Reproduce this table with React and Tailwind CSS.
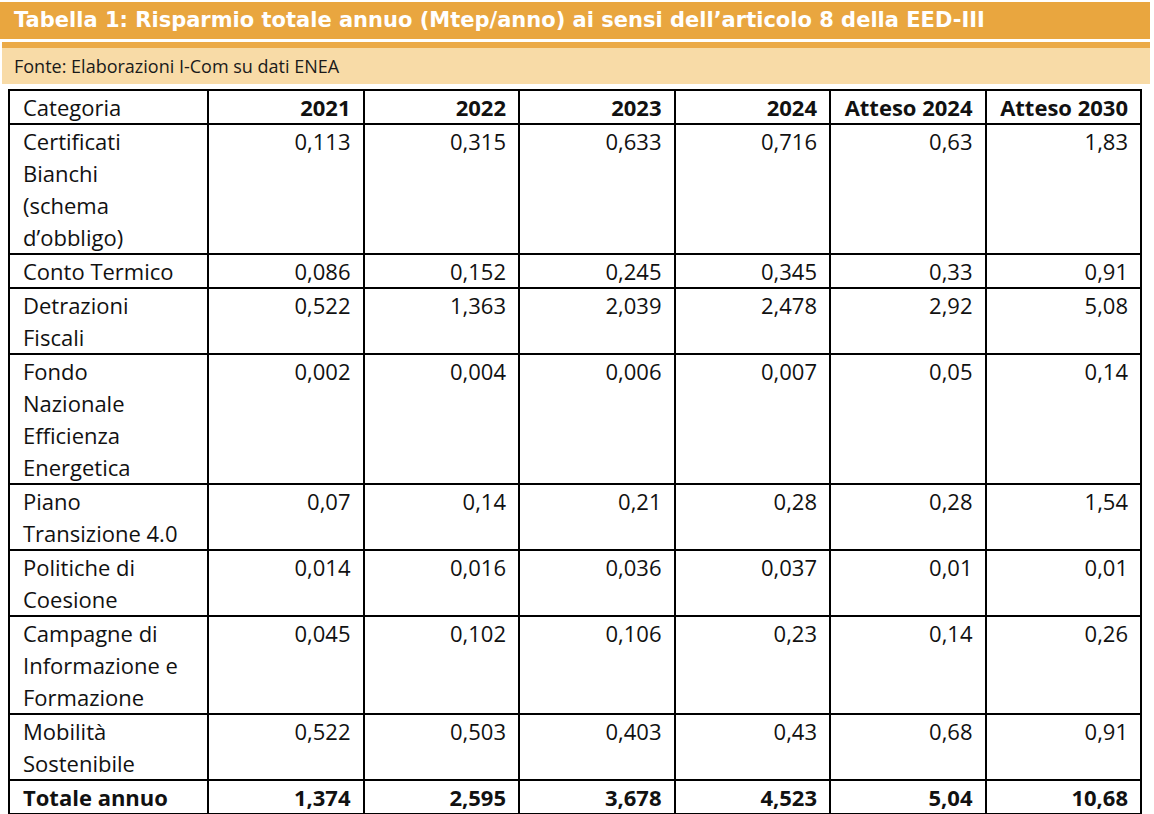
import React from "react";

const cols = ["2021", "2022", "2023", "2024", "Atteso 2024", "Atteso 2030"];

const rows = [
  { label: ["Certificati", "Bianchi", "(schema", "d’obbligo)"], values: ["0,113", "0,315", "0,633", "0,716", "0,63", "1,83"] },
  { label: ["Conto Termico"], values: ["0,086", "0,152", "0,245", "0,345", "0,33", "0,91"] },
  { label: ["Detrazioni", "Fiscali"], values: ["0,522", "1,363", "2,039", "2,478", "2,92", "5,08"] },
  { label: ["Fondo", "Nazionale", "Efficienza", "Energetica"], values: ["0,002", "0,004", "0,006", "0,007", "0,05", "0,14"] },
  { label: ["Piano", "Transizione 4.0"], values: ["0,07", "0,14", "0,21", "0,28", "0,28", "1,54"] },
  { label: ["Politiche di", "Coesione"], values: ["0,014", "0,016", "0,036", "0,037", "0,01", "0,01"] },
  { label: ["Campagne di", "Informazione e", "Formazione"], values: ["0,045", "0,102", "0,106", "0,23", "0,14", "0,26"] },
  { label: ["Mobilità", "Sostenibile"], values: ["0,522", "0,503", "0,403", "0,43", "0,68", "0,91"] },
];

const totals = ["1,374", "2,595", "3,678", "4,523", "5,04", "10,68"];

export default function App() {
  return (
    <div className="w-[1154px] h-[814px] bg-white overflow-hidden pt-[2px] font-['Open_Sans',sans-serif]">
      {/* Titolo */}
      <div className="w-[1150px] h-[37px] bg-[#E9A63F] pl-[14px] text-white font-bold text-[21px] leading-[37px] font-['DejaVu_Sans',sans-serif]">
        Tabella 1: Risparmio totale annuo (Mtep/anno) ai sensi dell’articolo 8 della EED-III
      </div>

      {/* Fonte */}
      <div className="ml-[2px] mt-[3px] w-[1148px]">
        <div className="h-[6px] bg-[#EBAA47]"></div>
        <div className="h-[36px] bg-[#F8DBA7] pl-[12px] text-[18px] leading-[36px] text-[#1a1a1a]">
          Fonte: Elaborazioni I-Com su dati ENEA
        </div>
      </div>

      {/* Tabella */}
      <table className="ml-[8px] mt-[5px] w-[1132px] table-fixed border-collapse text-[22px] leading-[32px] text-[#111]">
        <colgroup>
          <col className="w-[199px]" />
          {cols.map((c) => (
            <col key={c} className="w-[155.5px]" />
          ))}
        </colgroup>
        <thead>
          <tr>
            <th className="border-2 border-black px-[13px] text-left font-normal align-top">Categoria</th>
            {cols.map((c) => (
              <th key={c} className="border-2 border-black px-[12px] text-right font-bold align-top whitespace-nowrap">
                {c}
              </th>
            ))}
          </tr>
        </thead>
        <tbody>
          {rows.map((r, i) => (
            <tr key={i}>
              <td className="border-2 border-black px-[13px] align-top">
                {r.label.map((l, j) => (
                  <div key={j} className="whitespace-nowrap">{l}</div>
                ))}
              </td>
              {r.values.map((v, j) => (
                <td key={j} className="border-2 border-black px-[12px] text-right align-top">
                  {v}
                </td>
              ))}
            </tr>
          ))}
          <tr className="font-bold">
            <td className="border-2 border-black px-[13px] align-top">Totale annuo</td>
            {totals.map((v, j) => (
              <td key={j} className="border-2 border-black px-[12px] text-right align-top">
                {v}
              </td>
            ))}
          </tr>
        </tbody>
      </table>
    </div>
  );
}
